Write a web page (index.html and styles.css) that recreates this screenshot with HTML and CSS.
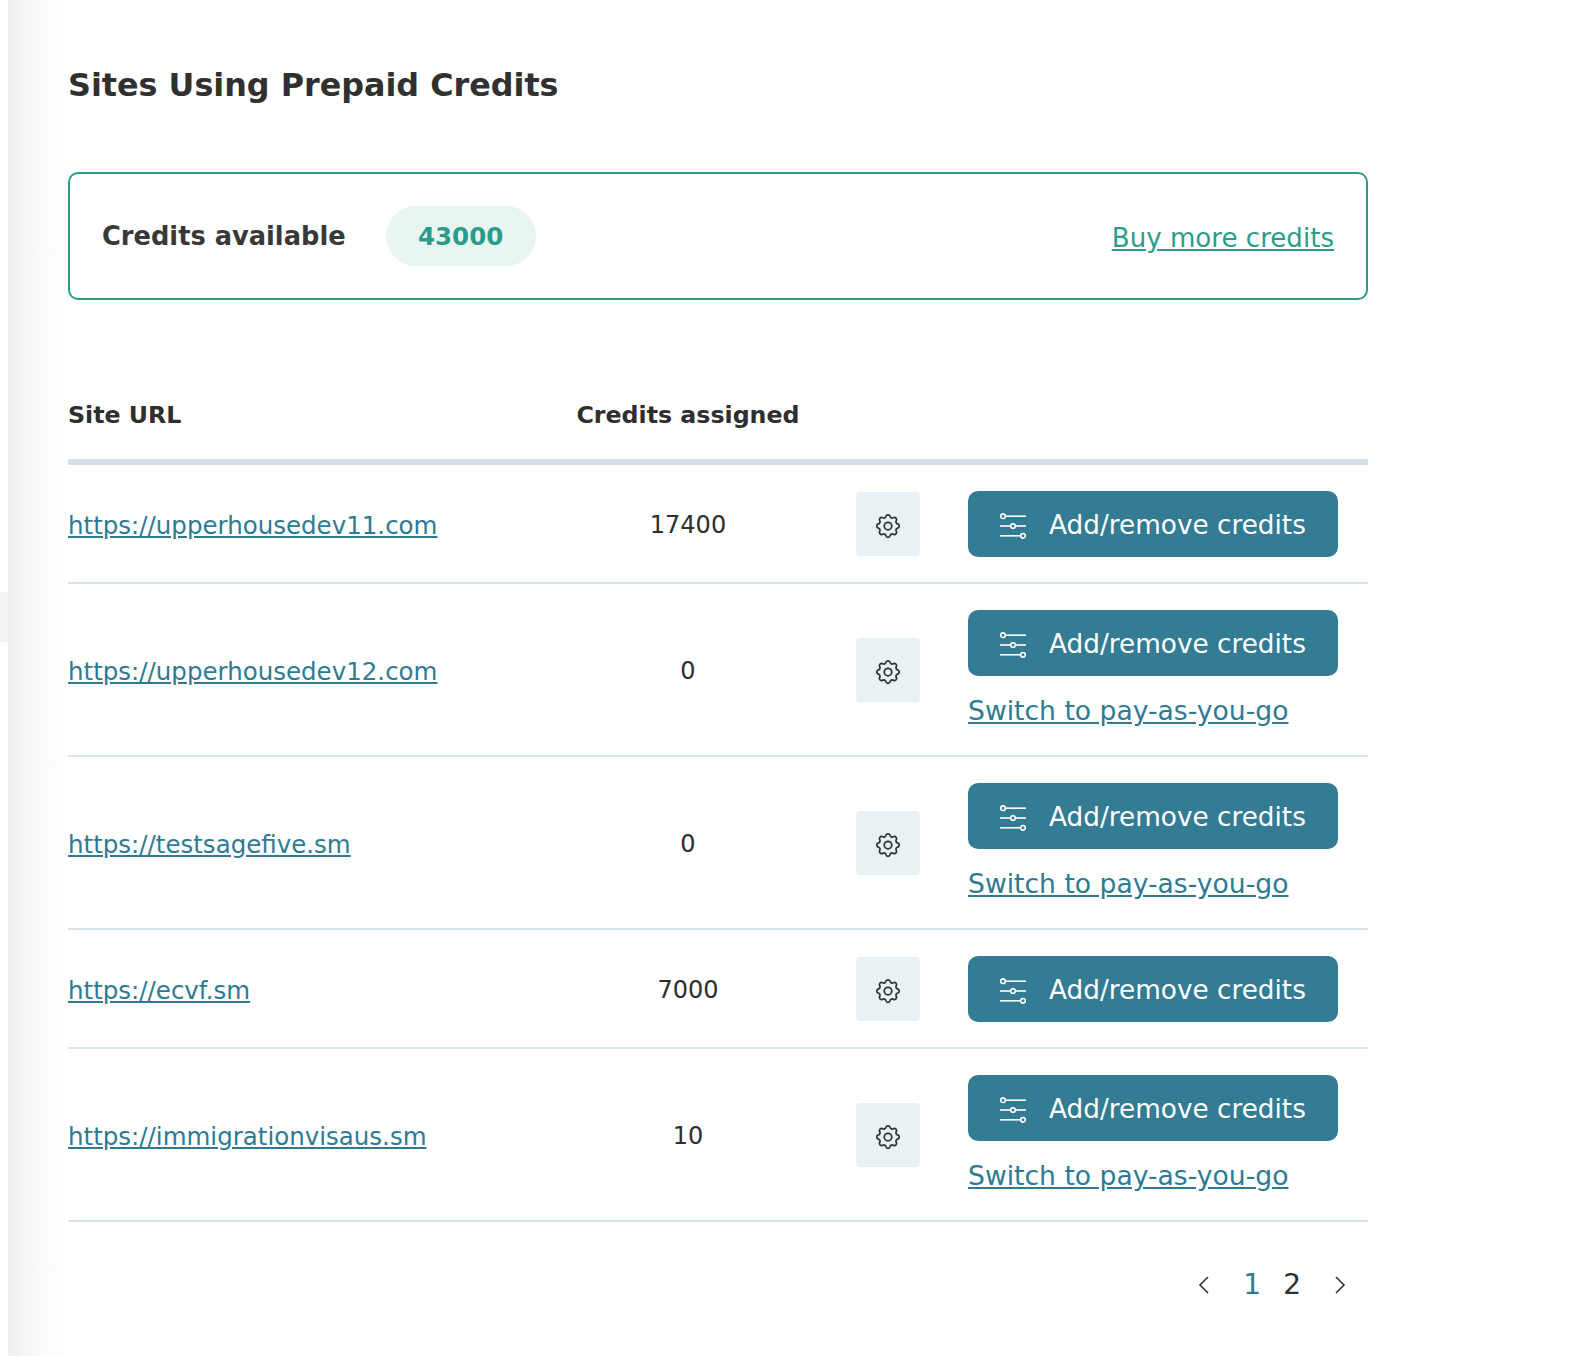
FILE: index.html
```html
<!DOCTYPE html>
<html lang="en">
<head>
<meta charset="utf-8">
<title>Sites Using Prepaid Credits</title>
<link rel="stylesheet" href="styles.css">
</head>
<body>
<svg class="sprite" width="0" height="0" aria-hidden="true">
  <symbol id="gear" viewBox="0 0 24 24">
    <path fill="none" stroke="currentColor" stroke-width="1.4" stroke-linecap="round" stroke-linejoin="round" d="M10.325 4.317c.426-1.756 2.924-1.756 3.35 0a1.724 1.724 0 0 0 2.573 1.066c1.543-.94 3.31.826 2.37 2.37a1.724 1.724 0 0 0 1.065 2.572c1.756.426 1.756 2.924 0 3.35a1.724 1.724 0 0 0-1.066 2.573c.94 1.543-.826 3.31-2.37 2.37a1.724 1.724 0 0 0-2.572 1.065c-.426 1.756-2.924 1.756-3.35 0a1.724 1.724 0 0 0-2.573-1.066c-1.543.94-3.31-.826-2.37-2.37a1.724 1.724 0 0 0-1.065-2.572c-1.756-.426-1.756-2.924 0-3.35a1.724 1.724 0 0 0 1.066-2.573c-.94-1.543.826-3.31 2.37-2.37.996.608 2.296.07 2.572-1.065z"/>
    <circle cx="12" cy="12" r="3" fill="none" stroke="currentColor" stroke-width="1.4"/>
  </symbol>
  <symbol id="sliders" viewBox="0 0 26 26">
    <g fill="none" stroke="currentColor" stroke-width="1.6">
      <circle cx="3" cy="3.200" r="2.300"/><path d="M5.500 3.200H26"/>
      <path d="M0 13h10"/><circle cx="13" cy="13" r="2.300"/><path d="M15.500 13H26"/>
      <path d="M0 22.800h20.500"/><circle cx="23" cy="22.800" r="2.300"/>
    </g>
  </symbol>
</svg>
<div class="notch"></div>
<main class="page">
  <h1 class="title">Sites Using Prepaid Credits</h1>

  <section class="summary">
    <strong class="summary-label">Credits available</strong>
    <span class="pill">43000</span>
    <a class="buy" href="#">Buy more credits</a>
  </section>

  <div class="head row-grid">
    <div>Site URL</div>
    <div class="center nowrap">Credits assigned</div>
  </div>

  <div class="row row-grid">
    <a class="link" href="#">https://upperhousedev11.com</a>
    <div class="center">17400</div>
    <button class="gear-btn"><svg class="gear"><use href="#gear"/></svg></button>
    <div class="actions">
      <button class="btn"><svg class="sliders"><use href="#sliders"/></svg>Add/remove credits</button>
    </div>
  </div>
  <div class="row row-grid">
    <a class="link" href="#">https://upperhousedev12.com</a>
    <div class="center">0</div>
    <button class="gear-btn"><svg class="gear"><use href="#gear"/></svg></button>
    <div class="actions">
      <button class="btn"><svg class="sliders"><use href="#sliders"/></svg>Add/remove credits</button>
      <a class="link switch" href="#">Switch to pay-as-you-go</a>
    </div>
  </div>
  <div class="row row-grid">
    <a class="link" href="#">https://testsagefive.sm</a>
    <div class="center">0</div>
    <button class="gear-btn"><svg class="gear"><use href="#gear"/></svg></button>
    <div class="actions">
      <button class="btn"><svg class="sliders"><use href="#sliders"/></svg>Add/remove credits</button>
      <a class="link switch" href="#">Switch to pay-as-you-go</a>
    </div>
  </div>
  <div class="row row-grid">
    <a class="link" href="#">https://ecvf.sm</a>
    <div class="center">7000</div>
    <button class="gear-btn"><svg class="gear"><use href="#gear"/></svg></button>
    <div class="actions">
      <button class="btn"><svg class="sliders"><use href="#sliders"/></svg>Add/remove credits</button>
    </div>
  </div>
  <div class="row row-grid">
    <a class="link" href="#">https://immigrationvisaus.sm</a>
    <div class="center">10</div>
    <button class="gear-btn"><svg class="gear"><use href="#gear"/></svg></button>
    <div class="actions">
      <button class="btn"><svg class="sliders"><use href="#sliders"/></svg>Add/remove credits</button>
      <a class="link switch" href="#">Switch to pay-as-you-go</a>
    </div>
  </div>

  <nav class="pager">
    <svg class="chev" viewBox="0 0 12 20"><path d="M10 2 2 10l8 8"/></svg>
    <a class="num current" href="#">1</a>
    <a class="num" href="#">2</a>
    <svg class="chev" viewBox="0 0 12 20"><path d="m2 2 8 8-8 8"/></svg>
  </nav>
</main>
</body>
</html>
```
FILE: styles.css
```css
* { box-sizing: border-box; }
html, body { margin: 0; padding: 0; background: #fff; }
body {
  position: relative;
  height: 1356px;
  overflow: hidden;
  font-family: "DejaVu Sans", Verdana, sans-serif;
  color: #2e2e2e;
  font-size: 24px;
}
.sprite { position: absolute; }
.notch {
  position: absolute;
  left: 0;
  top: 592px;
  width: 8px;
  height: 50px;
  background: #f3f3f3;
}
.page {
  margin-left: 8px;
  height: 1356px;
  width: 1572px;
  padding: 64px 0 0 60px;
  background: linear-gradient(to right, #f0f0f0 0, #fbfbfb 36px, #fff 60px);
}
.title {
  margin: 0 0 66px;
  font-size: 31.8px;
  line-height: 42px;
  font-weight: 700;
  color: #303030;
}
.summary {
  display: flex;
  align-items: center;
  width: 1300px;
  height: 128px;
  padding: 0 32px 0 32px;
  border: 2px solid #2a9d8a;
  border-radius: 10px;
}
.summary-label { font-size: 25.7px; font-weight: 700; color: #383838; }
.pill {
  margin-left: 40px;
  width: 150px;
  height: 60px;
  border-radius: 30px;
  background: #e9f5f3;
  color: #2a9d8a;
  font-size: 24.5px;
  font-weight: 700;
  display: flex;
  align-items: center;
  justify-content: center;
  padding-top: 1px;
}
.buy {
  margin-left: auto;
  padding-top: 4px;
  color: #2a9d8a;
  font-size: 26.1px;
}
.row-grid {
  display: grid;
  grid-template-columns: 508px 224px 64px 370px;
  column-gap: 0;
  align-items: center;
  width: 1300px;
}
.head {
  margin-top: 90px;
  height: 75px;
  padding-bottom: 20px;
  border-bottom: 6px solid #d3e2e8;
  font-weight: 700;
  font-size: 23.7px;
}
.center { text-align: center; }
.nowrap { white-space: nowrap; }
.row {
  padding: 26px 0 25px;
  border-bottom: 2px solid #d8e5ec;
}
.row > .link, .row > .center { padding-top: 2px; }
.link { color: #2f7a93; font-size: 24.5px; }
.gear-btn {
  grid-column: 3;
  margin-left: 56px;
  width: 64px;
  height: 64px;
  padding: 3px 0 0;
  border: 0;
  border-radius: 4px;
  background: #e8f1f4;
  color: #333;
  display: flex;
  align-items: center;
  justify-content: center;
}
.gear { width: 30px; height: 30px; }
.actions { margin-left: 104px; width: 370px; display: flex; flex-direction: column; align-items: flex-start; }
.btn {
  width: 370px;
  height: 66px;
  border: 0;
  border-radius: 10px;
  background: #347b94;
  color: #fff;
  font: inherit;
  font-size: 26.3px;
  display: flex;
  align-items: center;
  padding: 2px 0 0 32px;
}
.sliders { width: 26px; height: 26px; margin: 2px 23px 0 0; }
.switch { margin: 18px 0 2px; line-height: 34px; font-size: 26.6px; }
.pager {
  width: 1300px;
  display: flex;
  align-items: center;
  justify-content: flex-end;
  padding: 46px 22px 0 0;
  font-size: 28px;
}
.chev { width: 12px; height: 20px; fill: none; stroke: #333; stroke-width: 1.6; }
.num { color: #2e2e2e; text-decoration: none; margin-left: 22px; }
.num.current { color: #2f7a93; margin-left: 33px; }
.num + .chev { margin-left: 33px; }
```
